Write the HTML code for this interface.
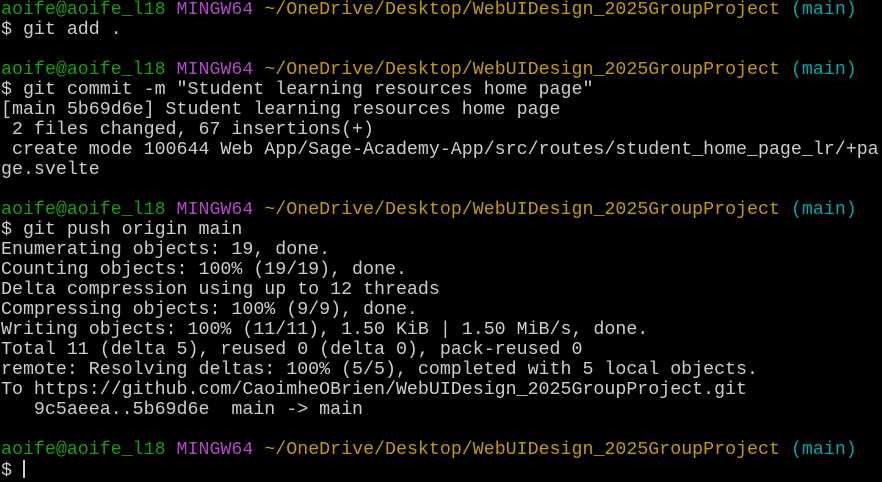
<!DOCTYPE html><html><head><style>
body{margin:0;background:#000;width:882px;height:482px;overflow:hidden}
pre{margin:0;padding:0 0 0 1px;font-family:"Liberation Mono",monospace;font-size:18.3px;line-height:20px;color:#cccccc;white-space:pre}
.g{color:#13a10e}.m{color:#b148c6}.y{color:#c19c00}.c{color:#00a8a8}
.cur{display:inline-block;width:2px;height:18px;background:#ccc;vertical-align:-3px}
</style></head><body><pre><span class="g">aoife@aoife_l18</span> <span class="m">MINGW64</span> <span class="y">~/OneDrive/Desktop/WebUIDesign_2025GroupProject</span> <span class="c">(main)</span>
$ git add .

<span class="g">aoife@aoife_l18</span> <span class="m">MINGW64</span> <span class="y">~/OneDrive/Desktop/WebUIDesign_2025GroupProject</span> <span class="c">(main)</span>
$ git commit -m "Student learning resources home page"
[main 5b69d6e] Student learning resources home page
 2 files changed, 67 insertions(+)
 create mode 100644 Web App/Sage-Academy-App/src/routes/student_home_page_lr/+pa
ge.svelte

<span class="g">aoife@aoife_l18</span> <span class="m">MINGW64</span> <span class="y">~/OneDrive/Desktop/WebUIDesign_2025GroupProject</span> <span class="c">(main)</span>
$ git push origin main
Enumerating objects: 19, done.
Counting objects: 100% (19/19), done.
Delta compression using up to 12 threads
Compressing objects: 100% (9/9), done.
Writing objects: 100% (11/11), 1.50 KiB | 1.50 MiB/s, done.
Total 11 (delta 5), reused 0 (delta 0), pack-reused 0
remote: Resolving deltas: 100% (5/5), completed with 5 local objects.
To https://github.com/CaoimheOBrien/WebUIDesign_2025GroupProject.git
   9c5aeea..5b69d6e  main -> main

<span class="g">aoife@aoife_l18</span> <span class="m">MINGW64</span> <span class="y">~/OneDrive/Desktop/WebUIDesign_2025GroupProject</span> <span class="c">(main)</span>
$ <span class="cur"></span></pre></body></html>
